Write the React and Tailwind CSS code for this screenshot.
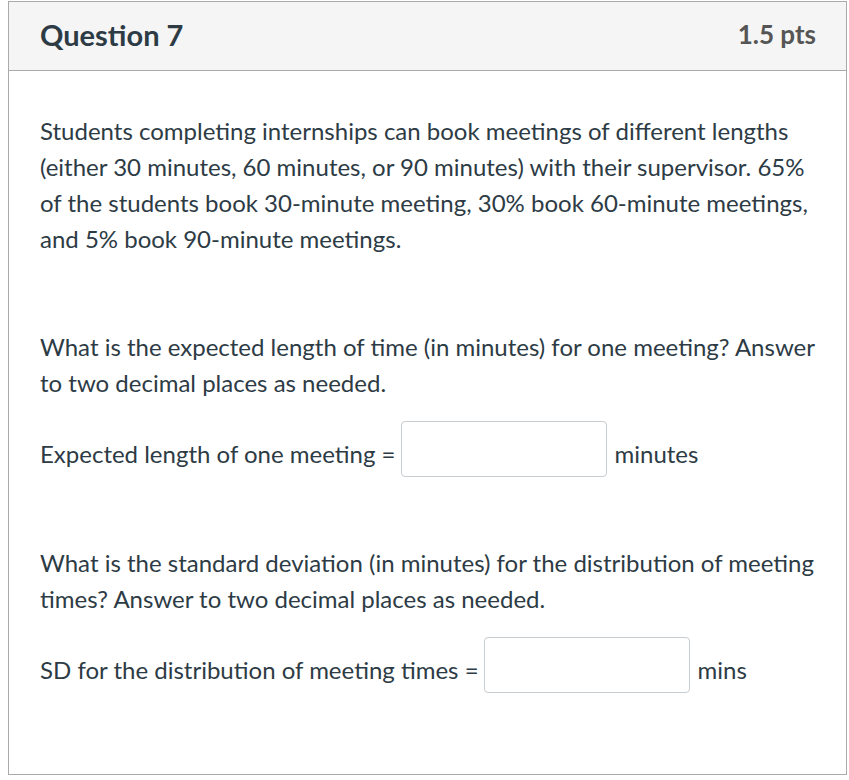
import React from 'react';

const AnswerRow = ({ label, unit }) => (
  <div className="flex items-end">
    <span className="pb-[5px]">{label}</span>
    <input
      type="text"
      className="ml-[5px] mr-[8px] h-[56px] w-[206px] rounded-[4px] border border-[#c7cdd1] bg-white outline-none"
    />
    <span className="pb-[5px]">{unit}</span>
  </div>
);

export default function App() {
  return (
    <div className="bg-white pl-[8px] pr-[2px] pt-[1px] pb-[3px] font-['Lato',sans-serif] text-[#2d3b45]">
      <div className="border border-[#aaaaaa]">
        {/* Header */}
        <div className="flex h-[69px] items-center justify-between border-b border-[#aaaaaa] bg-[#f5f5f5] pl-[31px] pr-[30px] pb-[3px]">
          <h2 className="text-[29px] font-bold">Question 7</h2>
          <span className="text-[26px] font-bold text-[#555555]">1.5 pts</span>
        </div>

        {/* Body */}
        <div className="px-[31px] pt-[42px] pb-[81px] text-[24px] leading-[36px]">
          <p>
            Students completing internships can book meetings of different lengths
            (either 30 minutes, 60 minutes, or 90 minutes) with their supervisor. 65%
            of the students book 30-minute meeting, 30% book 60-minute meetings,
            and 5% book 90-minute meetings.
          </p>

          <p className="mt-[72px]">
            What is the expected length of time (in minutes) for one meeting? Answer
            to two decimal places as needed.
          </p>

          <div className="mt-[20px]">
            <AnswerRow label="Expected length of one meeting =" unit="minutes" />
          </div>

          <p className="mt-[68px]">
            What is the standard deviation (in minutes) for the distribution of meeting
            times? Answer to two decimal places as needed.
          </p>

          <div className="mt-[20px]">
            <AnswerRow label="SD for the distribution of meeting times =" unit="mins" />
          </div>
        </div>
      </div>
    </div>
  );
}
